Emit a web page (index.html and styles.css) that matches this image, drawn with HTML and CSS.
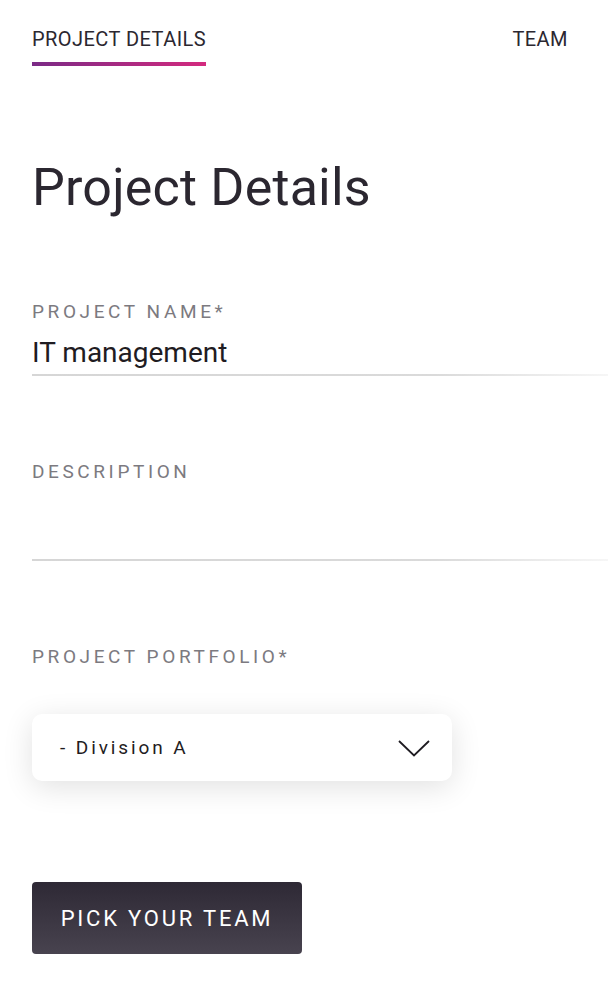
FILE: index.html
```html
<!DOCTYPE html>
<html>
<head>
<meta charset="utf-8">
<link rel="stylesheet" href="styles.css">
</head>
<body>
<div class="page">
  <nav class="tabs">
    <div class="tab active">PROJECT DETAILS</div>
    <div class="tab">TEAM</div>
  </nav>
  <h1 class="title">Project Details</h1>
  <div class="field">
    <div class="label">PROJECT NAME*</div>
    <div class="value">IT management</div>
    <div class="rule"></div>
  </div>
  <div class="field desc">
    <div class="label">DESCRIPTION</div>
    <div class="value empty"></div>
    <div class="rule"></div>
  </div>
  <div class="field portfolio">
    <div class="label">PROJECT PORTFOLIO*</div>
    <div class="select">
      <span class="select-text">- Division A</span>
      <svg class="chev" width="32" height="17" viewBox="0 0 32 17"><path d="M1 1 L16 15.5 L31 1" fill="none" stroke="#1f1c22" stroke-width="1.8"/></svg>
    </div>
  </div>
  <button class="btn">PICK YOUR TEAM</button>
</div>
</body>
</html>
```
FILE: styles.css
```css
html, body { margin: 0; padding: 0; background: #fff; }
body { font-family: Roboto, "Noto Sans", sans-serif; color: #2b2730; }
.page { padding-left: 32px; overflow: hidden; }
.tabs { display: flex; justify-content: space-between; padding-right: 40px; padding-top: 26px; }
.tab { font-size: 20px; letter-spacing: 0.45px; line-height: 26px; padding-bottom: 10px; color: #2b2730; }
.tab.active { border-bottom: 4px solid; border-image: linear-gradient(90deg, #7a2a86, #d42a7e) 1; }
.title { font-weight: 400; font-size: 52px; line-height: 60px; margin: 92px 0 0; letter-spacing: 0.2px; color: #2b2730; }
.field { margin-top: 82px; }
.label { font-size: 19px; letter-spacing: 3.6px; color: #7c7a80; line-height: 24px; }
.value { font-size: 28px; line-height: 30px; margin-top: 14px; color: #1f1c22; }
.value.empty { height: 30px; margin-top: 39px; }
.rule { height: 2px; margin-top: 6px; background: linear-gradient(90deg, #d6d6d6 0%, #dadada 70%, #f6f6f6 100%); }
.desc { margin-top: 84px; }
.portfolio { margin-top: 84px; }
.select { margin-top: 45px; width: 420px; height: 67px; box-sizing: border-box; background: #fff; border-radius: 10px; box-shadow: 0 6px 30px rgba(0,0,0,0.12); display: flex; align-items: center; justify-content: space-between; padding: 0 22px 0 28px; }
.select-text { font-size: 19px; letter-spacing: 2.9px; color: #1f1c22; }
.chev { display: block; margin-top: 2px; }
.btn { margin-top: 101px; width: 270px; height: 72px; border: none; border-radius: 4px; background: linear-gradient(180deg, #2e2935 0%, #48434f 100%); color: #fff; font-family: Roboto, "Noto Sans", sans-serif; font-size: 22px; letter-spacing: 2.8px; padding: 0; display: block; }
```
